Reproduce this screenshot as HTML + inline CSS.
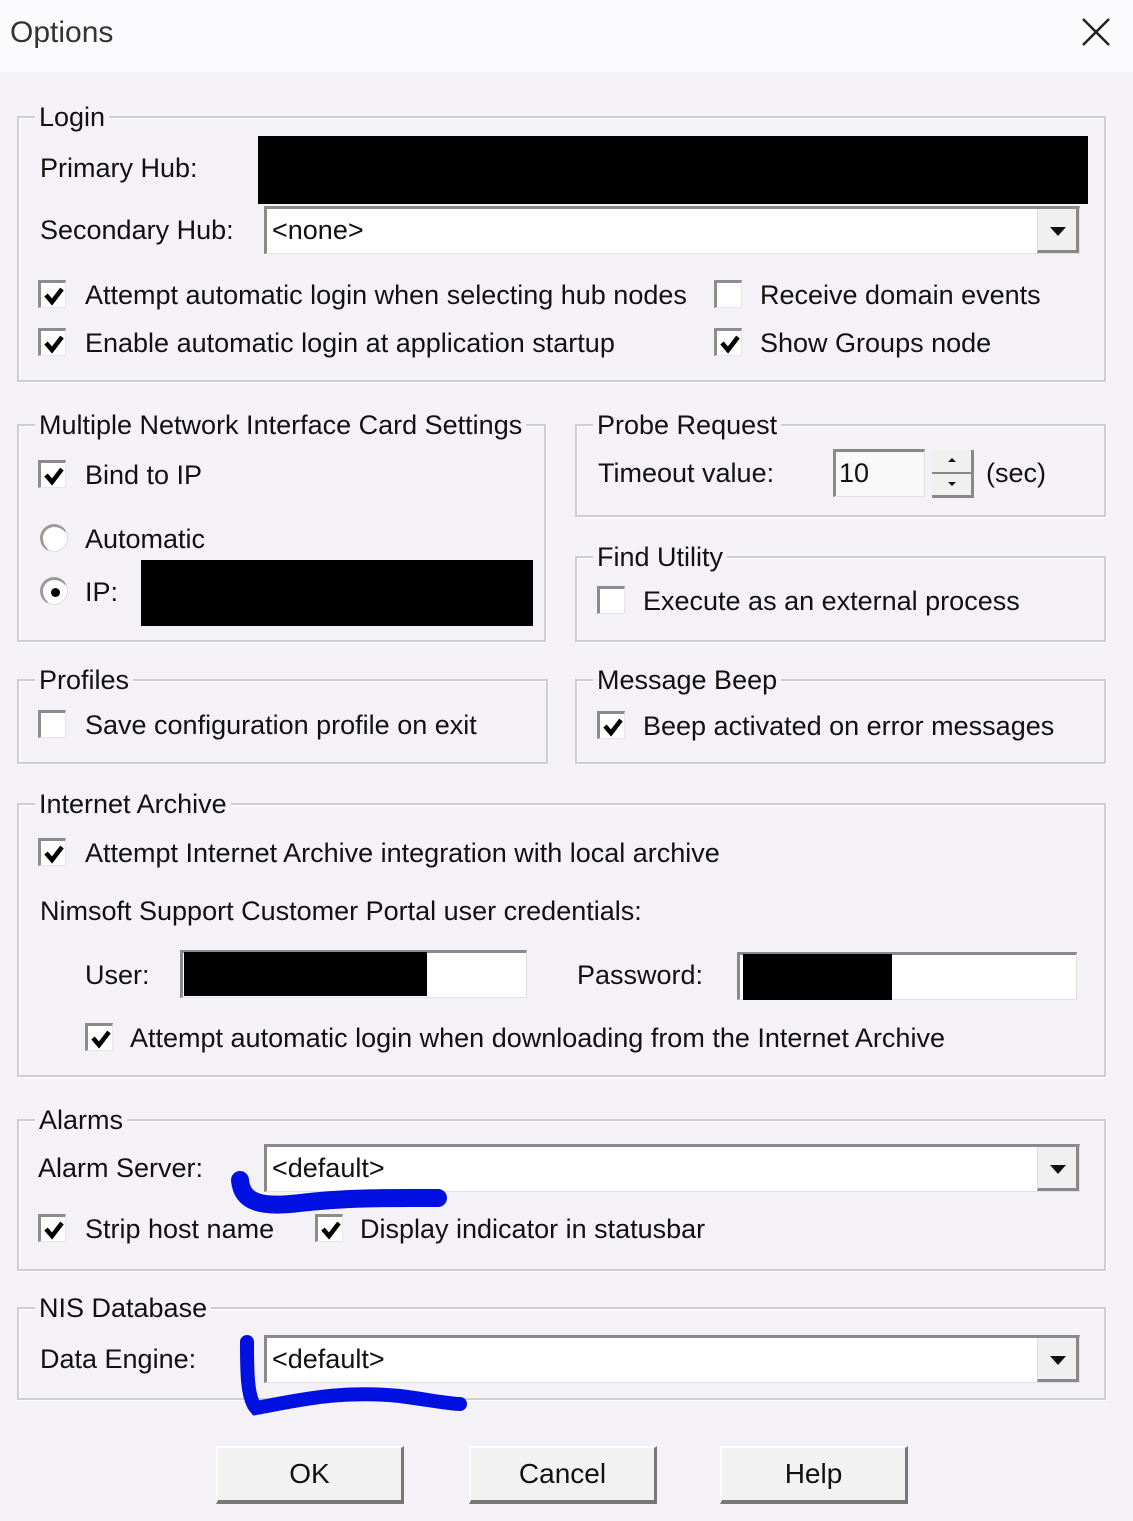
<!DOCTYPE html>
<html><head><meta charset="utf-8"><style>
*{margin:0;padding:0;box-sizing:border-box}
body{width:1133px;height:1521px;background:#f4f2f7;position:relative;overflow:hidden;font-family:"Liberation Sans",sans-serif;color:#111}
.title{position:absolute;left:0;top:0;width:1133px;height:72px;background:#fbfbfd}
.t{position:absolute;font-size:27px;line-height:32px;white-space:nowrap;letter-spacing:0}
.g{position:absolute;border:2px solid #cfcdd3;box-shadow:inset 1px 1px 0 #fff,1px 1px 0 #fff}
.gl{position:absolute;background:#f4f2f7;padding:0 4px;font-size:27px;line-height:32px;letter-spacing:0;white-space:nowrap}
.cb{position:absolute;width:28px;height:28px;background:#fff;border-top:3px solid #8c8c8c;border-left:3px solid #8c8c8c;border-right:1px solid #e6e6e6;border-bottom:1px solid #e6e6e6}
.cb svg{position:absolute;left:2px;top:2px}
.rd{position:absolute;width:28px;height:28px;border-radius:50%;background:#fff;border-top:3px solid #9a9a9a;border-left:3px solid #9a9a9a;border-right:1px solid #ddd;border-bottom:1px solid #ddd}
.in{position:absolute;background:#fff;border-top:3px solid #8a8a8a;border-left:3px solid #8a8a8a;border-right:1px solid #e0e0e0;border-bottom:1px solid #e0e0e0}
.dd{position:absolute;right:0;top:0;width:42px;height:100%;background:#f0f0f0;border-left:1px solid #ddd;border-bottom:3px solid #888;border-right:3px solid #888}
.dd:after{content:"";position:absolute;left:12px;top:18px;border-left:8px solid transparent;border-right:8px solid transparent;border-top:9px solid #111}
.blk{position:absolute;background:#000}
.btn{position:absolute;width:188px;height:58px;background:#f2f2f2;border-top:2px solid #fff;border-left:2px solid #fff;border-right:3px solid #777;border-bottom:4px solid #777;font-size:28px;line-height:52px;text-align:center}
</style></head><body>
<div class="title"></div>
<div class="t" style="left:10px;top:17px;font-size:30px;color:#333">Options</div>
<svg style="position:absolute;left:1081px;top:17px" width="30" height="30"><path d="M2 2L28 28M28 2L2 28" stroke="#222" stroke-width="2.5"/></svg>

<!-- Login -->
<div class="g" style="left:17px;top:116px;width:1089px;height:266px"></div>
<div class="gl" style="left:35px;top:101px">Login</div>
<div class="t" style="left:40px;top:152px">Primary Hub:</div>
<div class="blk" style="left:258px;top:136px;width:830px;height:68px"></div>
<div class="t" style="left:40px;top:214px">Secondary Hub:</div>
<div class="in" style="left:264px;top:206px;width:816px;height:48px"><div class="dd"></div></div>
<div class="t" style="left:272px;top:214px">&lt;none&gt;</div>
<div class="cb" style="left:38px;top:280px"><svg width="22" height="22"><path d="M3 10L9 17L19 4" stroke="#000" stroke-width="4.5" fill="none"/></svg></div>
<div class="t" style="left:85px;top:279px">Attempt automatic login when selecting hub nodes</div>
<div class="cb" style="left:714px;top:280px"></div>
<div class="t" style="left:760px;top:279px">Receive domain events</div>
<div class="cb" style="left:38px;top:328px"><svg width="22" height="22"><path d="M3 10L9 17L19 4" stroke="#000" stroke-width="4.5" fill="none"/></svg></div>
<div class="t" style="left:85px;top:327px">Enable automatic login at application startup</div>
<div class="cb" style="left:714px;top:328px"><svg width="22" height="22"><path d="M3 10L9 17L19 4" stroke="#000" stroke-width="4.5" fill="none"/></svg></div>
<div class="t" style="left:760px;top:327px">Show Groups node</div>

<!-- NIC -->
<div class="g" style="left:17px;top:424px;width:529px;height:218px"></div>
<div class="gl" style="left:35px;top:409px">Multiple Network Interface Card Settings</div>
<div class="cb" style="left:38px;top:460px"><svg width="22" height="22"><path d="M3 10L9 17L19 4" stroke="#000" stroke-width="4.5" fill="none"/></svg></div>
<div class="t" style="left:85px;top:459px">Bind to IP</div>
<div class="rd" style="left:40px;top:524px"></div>
<div class="t" style="left:85px;top:523px">Automatic</div>
<div class="rd" style="left:40px;top:577px"><div style="position:absolute;left:8px;top:8px;width:9px;height:9px;border-radius:50%;background:#000"></div></div>
<div class="t" style="left:85px;top:576px">IP:</div>
<div class="blk" style="left:141px;top:560px;width:392px;height:66px"></div>

<!-- Probe -->
<div class="g" style="left:575px;top:424px;width:531px;height:93px"></div>
<div class="gl" style="left:593px;top:409px">Probe Request</div>
<div class="t" style="left:598px;top:457px">Timeout value:</div>
<div class="in" style="left:833px;top:449px;width:92px;height:48px;background:#f8f8f8"></div>
<div class="t" style="left:839px;top:457px">10</div>
<div style="position:absolute;left:932px;top:450px;width:42px;height:48px;background:#f0f0f0;border-right:3px solid #888;border-bottom:3px solid #888">
<div style="position:absolute;left:0;top:22px;width:39px;height:2px;background:#888"></div>
<div style="position:absolute;left:16px;top:8px;border-left:4px solid transparent;border-right:4px solid transparent;border-bottom:4px solid #111"></div>
<div style="position:absolute;left:16px;top:32px;border-left:4px solid transparent;border-right:4px solid transparent;border-top:4px solid #111"></div></div>
<div class="t" style="left:986px;top:457px">(sec)</div>

<!-- Find -->
<div class="g" style="left:575px;top:556px;width:531px;height:86px"></div>
<div class="gl" style="left:593px;top:541px">Find Utility</div>
<div class="cb" style="left:597px;top:586px"></div>
<div class="t" style="left:643px;top:585px">Execute as an external process</div>

<!-- Profiles -->
<div class="g" style="left:17px;top:679px;width:531px;height:85px"></div>
<div class="gl" style="left:35px;top:664px">Profiles</div>
<div class="cb" style="left:38px;top:710px"></div>
<div class="t" style="left:85px;top:709px">Save configuration profile on exit</div>

<!-- Beep -->
<div class="g" style="left:575px;top:679px;width:531px;height:85px"></div>
<div class="gl" style="left:593px;top:664px">Message Beep</div>
<div class="cb" style="left:597px;top:711px"><svg width="22" height="22"><path d="M3 10L9 17L19 4" stroke="#000" stroke-width="4.5" fill="none"/></svg></div>
<div class="t" style="left:643px;top:710px">Beep activated on error messages</div>

<!-- Internet Archive -->
<div class="g" style="left:17px;top:803px;width:1089px;height:274px"></div>
<div class="gl" style="left:35px;top:788px">Internet Archive</div>
<div class="cb" style="left:38px;top:838px"><svg width="22" height="22"><path d="M3 10L9 17L19 4" stroke="#000" stroke-width="4.5" fill="none"/></svg></div>
<div class="t" style="left:85px;top:837px">Attempt Internet Archive integration with local archive</div>
<div class="t" style="left:40px;top:895px">Nimsoft Support Customer Portal user credentials:</div>
<div class="t" style="left:85px;top:959px">User:</div>
<div class="in" style="left:180px;top:950px;width:347px;height:48px"></div>
<div class="blk" style="left:184px;top:952px;width:243px;height:44px"></div>
<div class="t" style="left:577px;top:959px">Password:</div>
<div class="in" style="left:737px;top:952px;width:340px;height:48px"></div>
<div class="blk" style="left:743px;top:954px;width:149px;height:46px"></div>
<div class="cb" style="left:85px;top:1023px"><svg width="22" height="22"><path d="M3 10L9 17L19 4" stroke="#000" stroke-width="4.5" fill="none"/></svg></div>
<div class="t" style="left:130px;top:1022px">Attempt automatic login when downloading from the Internet Archive</div>

<!-- Alarms -->
<div class="g" style="left:17px;top:1119px;width:1089px;height:152px"></div>
<div class="gl" style="left:35px;top:1104px">Alarms</div>
<div class="t" style="left:38px;top:1152px">Alarm Server:</div>
<div class="in" style="left:264px;top:1144px;width:816px;height:48px"><div class="dd"></div></div>
<div class="t" style="left:272px;top:1152px">&lt;default&gt;</div>
<div class="cb" style="left:38px;top:1214px"><svg width="22" height="22"><path d="M3 10L9 17L19 4" stroke="#000" stroke-width="4.5" fill="none"/></svg></div>
<div class="t" style="left:85px;top:1213px">Strip host name</div>
<div class="cb" style="left:315px;top:1214px"><svg width="22" height="22"><path d="M3 10L9 17L19 4" stroke="#000" stroke-width="4.5" fill="none"/></svg></div>
<div class="t" style="left:360px;top:1213px">Display indicator in statusbar</div>

<!-- NIS -->
<div class="g" style="left:17px;top:1307px;width:1089px;height:93px"></div>
<div class="gl" style="left:35px;top:1292px">NIS Database</div>
<div class="t" style="left:40px;top:1343px">Data Engine:</div>
<div class="in" style="left:264px;top:1335px;width:816px;height:48px"><div class="dd"></div></div>
<div class="t" style="left:272px;top:1343px">&lt;default&gt;</div>

<!-- blue marks -->
<svg style="position:absolute;left:0;top:0" width="1133" height="1521">
<path d="M240 1180C242 1202 260 1208 300 1203C350 1197 400 1198 438 1198" stroke="#0010e0" stroke-width="18" fill="none" stroke-linecap="round"/>
<path d="M247 1342C247 1370 247 1398 256 1408C300 1400 340 1390 400 1396C430 1400 450 1404 460 1404" stroke="#0010e0" stroke-width="14" fill="none" stroke-linecap="round"/>
</svg>

<div class="btn" style="left:216px;top:1446px">OK</div>
<div class="btn" style="left:469px;top:1446px">Cancel</div>
<div class="btn" style="left:720px;top:1446px">Help</div>
</body></html>
